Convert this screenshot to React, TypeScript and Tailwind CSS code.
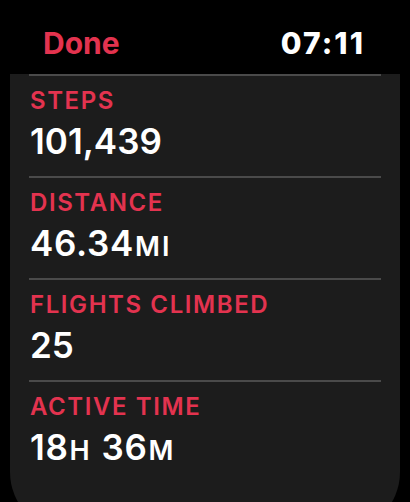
const rows = [
  { label: "STEPS", value: "101,439", parts: [] as string[][] },
  { label: "DISTANCE", value: "", parts: [["46.34", "MI"]] },
  { label: "FLIGHTS CLIMBED", value: "25", parts: [] },
  { label: "ACTIVE TIME", value: "", parts: [["18", "H"], ["\u00a036", "M"]] },
];

export default function App() {
  return (
    <div
      className="w-[410px] h-[502px] bg-black overflow-hidden flex flex-col"
      style={{ fontFamily: "Inter, 'Noto Sans', sans-serif" }}
    >
      <div className="h-[74px] shrink-0 flex justify-between pt-[26px] pl-[43px] pr-[45px]">
        <span className="text-[30px] leading-[34px] font-bold text-[#e3334f]">Done</span>
        <span className="text-[30px] leading-[34px] font-extrabold tracking-[0.07em] text-white">07:11</span>
      </div>
      <div className="mx-[10px] h-[458px] shrink-0 bg-[#1c1c1c] rounded-b-[60px] px-[19px]">
        {rows.map((r) => (
          <div key={r.label} className="border-t-2 border-[#4a4a4a] pt-[11px] pb-[15px] pl-px">
            <div className="text-[24px] leading-[28px] font-semibold tracking-[0.066em] text-[#e3334f]">
              {r.label}
            </div>
            <div className="mt-[6px] text-[35px] leading-[40px] font-semibold text-white">
              {r.value}
              {r.parts.map(([n, u]) => (
                <span key={u}>
                  <span className="tracking-[0.02em]">{n}</span>
                  <span className="ml-px text-[27px] leading-none tracking-[0.08em]">{u}</span>
                </span>
              ))}
            </div>
          </div>
        ))}
      </div>
    </div>
  );
}
